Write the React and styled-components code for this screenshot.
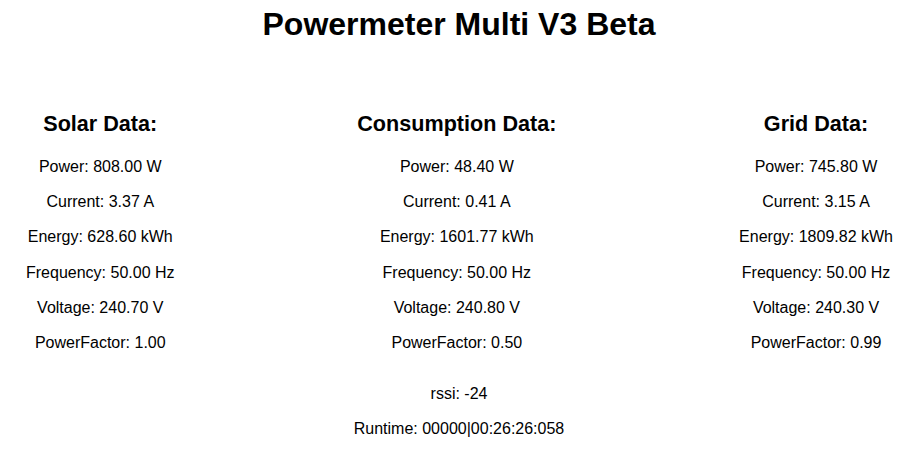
import styled, { createGlobalStyle } from "styled-components";

const GlobalStyle = createGlobalStyle`
  body {
    margin: 0;
    font-family: "Liberation Sans", Arial, sans-serif;
    color: #000;
    background: #fff;
  }
`;

const Page = styled.div`
  text-align: center;
  padding-left: 5px;
`;

const Title = styled.h1`
  font-size: 32px;
  margin: 6px 0 0;
  line-height: 37px;
`;

const Columns = styled.div`
  display: flex;
  justify-content: space-between;
  padding: 0 20px 0 21px;
  margin-top: 68px;
`;

const Column = styled.div`
  display: flex;
  flex-direction: column;
  align-items: center;
`;

const Heading = styled.h2`
  font-size: 21.6px;
  margin: 0 0 13px;
  line-height: 25px;
`;

const Line = styled.p`
  font-size: 16px;
  margin: 0;
  line-height: 35.2px;
`;

const Footer = styled.div`
  margin-top: 16px;
`;

const data = [
  {
    title: "Solar Data:",
    rows: ["Power: 808.00 W", "Current: 3.37 A", "Energy: 628.60 kWh", "Frequency: 50.00 Hz", "Voltage: 240.70 V", "PowerFactor: 1.00"],
  },
  {
    title: "Consumption Data:",
    rows: ["Power: 48.40 W", "Current: 0.41 A", "Energy: 1601.77 kWh", "Frequency: 50.00 Hz", "Voltage: 240.80 V", "PowerFactor: 0.50"],
  },
  {
    title: "Grid Data:",
    rows: ["Power: 745.80 W", "Current: 3.15 A", "Energy: 1809.82 kWh", "Frequency: 50.00 Hz", "Voltage: 240.30 V", "PowerFactor: 0.99"],
  },
];

export default function App() {
  return (
    <Page>
      <GlobalStyle />
      <Title>Powermeter Multi V3 Beta</Title>
      <Columns>
        {data.map((col) => (
          <Column key={col.title}>
            <Heading>{col.title}</Heading>
            {col.rows.map((r) => (
              <Line key={r}>{r}</Line>
            ))}
          </Column>
        ))}
      </Columns>
      <Footer>
        <Line>rssi: -24</Line>
        <Line>Runtime: 00000|00:26:26:058</Line>
      </Footer>
    </Page>
  );
}
